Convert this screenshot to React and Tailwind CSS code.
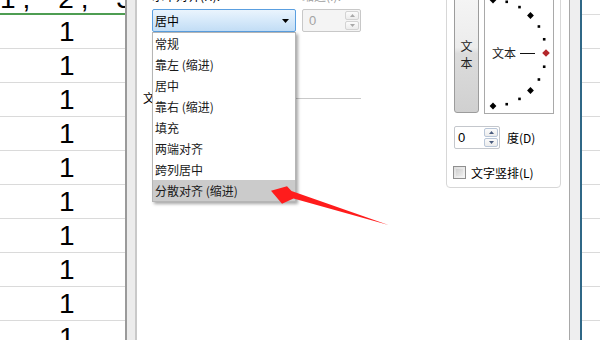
import React from "react";

function SpinButtons({ enabled }) {
  const tri = enabled ? "#4a5c7e" : "#a9a9a9";
  const brd = enabled ? "border-[#b9c6d8]" : "border-[#d3d3d3]";
  return (
    <div className="w-[15px] h-full flex flex-col gap-[1px] py-[1px] pr-[1px]">
      <div className={"flex-1 flex items-center justify-center border rounded-[2px] bg-[linear-gradient(#fbfbfb,#ececec)] " + brd}>
        <svg width="5" height="3" className="block">
          <polygon points="0,3 5,3 2.5,0" fill={tri} />
        </svg>
      </div>
      <div className={"flex-1 flex items-center justify-center border rounded-[2px] bg-[linear-gradient(#fbfbfb,#ececec)] " + brd}>
        <svg width="5" height="3" className="block">
          <polygon points="0,0 5,0 2.5,3" fill={tri} />
        </svg>
      </div>
    </div>
  );
}

function Sheet({ width, header, headerGreen, ones }) {
  const rows = Array.from({ length: 10 }, (_, i) => i);
  return (
    <div
      className="shrink-0 bg-white -mt-[20px] font-['Liberation_Sans',Arial,sans-serif] text-[28px] text-black"
      style={{ width }}
    >
      <div
        className={
          "h-[35px] flex items-center pt-[4px] whitespace-nowrap leading-none tracking-[7px] [word-spacing:6px] " +
          (headerGreen ? "border-b-2 border-[#4e9d52]" : "border-b border-[#dcdcdc]")
        }
      >
        {header}
      </div>
      {rows.map((i) => (
        <div key={i} className="h-[34px] border-b border-[#dadada] flex items-center pl-[59px] leading-none">
          {ones ? "1" : ""}
        </div>
      ))}
    </div>
  );
}

function Dial() {
  const cx = 8;
  const cy = 58;
  const r = 53;
  const pts = [];
  for (let i = 0; i <= 12; i++) {
    const a = (i * 15 * Math.PI) / 180;
    pts.push({ i, x: cx + r * Math.sin(a), y: cy - r * Math.cos(a) });
  }
  return (
    <div className="relative w-[70px] h-[120px] border border-[#a9a9a9] bg-white">
      <svg width="68" height="118" className="block">
        {pts.map((p) => {
          if (p.i === 6) {
            const d = 3.8;
            return (
              <polygon
                key={p.i}
                points={`${p.x},${p.y - d} ${p.x + d},${p.y} ${p.x},${p.y + d} ${p.x - d},${p.y}`}
                fill="#b3262a"
              />
            );
          }
          if (p.i % 3 === 0) {
            const d = 3.4;
            return (
              <polygon
                key={p.i}
                points={`${p.x},${p.y - d} ${p.x + d},${p.y} ${p.x},${p.y + d} ${p.x - d},${p.y}`}
                fill="#000"
              />
            );
          }
          return <rect key={p.i} x={p.x - 1.3} y={p.y - 1.3} width="2.6" height="2.6" fill="#000" />;
        })}
        <line x1="35" y1="58.5" x2="50" y2="58.5" stroke="#111" strokeWidth="1" />
      </svg>
      <span className="absolute left-[7px] top-[50px] text-[12px] leading-[16px] text-[#222]">文本</span>
    </div>
  );
}

export default function App() {
  const items = ["常规", "靠左 (缩进)", "居中", "靠右 (缩进)", "填充", "两端对齐", "跨列居中", "分散对齐 (缩进)"];
  return (
    <div className="relative w-[600px] h-[340px] overflow-hidden bg-white flex items-start font-['Noto_Sans_CJK_SC','Microsoft_YaHei',sans-serif] text-black">
      <Sheet width={125} header="1, 2, 3" headerGreen ones />

      {/* left window frame */}
      <div className="w-[2px] h-full shrink-0 bg-[#9a9a9a]" />
      <div className="w-[8px] h-full shrink-0 bg-[#ececec]" />
      <div className="w-[2px] h-full shrink-0 bg-[#c9c9c9]" />

      {/* dialog body */}
      <div className="w-[432px] h-full shrink-0 bg-white flex items-start">
        <div className="w-[224px] shrink-0 flex flex-col -mt-[11px]">
          <div className="flex pl-[15px] gap-[6px]">
            <div className="w-[144px] flex flex-col">
              <div className="h-[14px] leading-[14px] text-[12px] whitespace-nowrap">水平对齐(H):</div>
              <div className="relative mt-[6px] z-10">
                <div className="h-[23px] border border-[#5a9fe0] rounded-[2px] bg-[linear-gradient(#eaf4fd,#d6e9fa_50%,#c2ddf5)] flex items-center pl-[2px] text-[12px]">
                  <span className="flex-1 leading-none">居中</span>
                  <svg width="7" height="4" className="block mr-[6px]">
                    <polygon points="0,0 7,0 3.5,4" fill="#000" />
                  </svg>
                </div>
                <div className="absolute top-full left-0 w-[144px] bg-white border border-[#b5b5b5] shadow-[2px_2px_3px_rgba(0,0,0,0.35)]">
                  {items.map((t, i) => (
                    <div
                      key={t}
                      className={
                        "h-[21px] leading-[21px] pl-[2px] text-[12px] whitespace-nowrap text-[#1a1a1a] " +
                        (i === items.length - 1 ? "bg-[#cbcbcb]" : "")
                      }
                    >
                      {t}
                    </div>
                  ))}
                </div>
              </div>
            </div>
            <div className="w-[59px] flex flex-col">
              <div className="h-[14px] leading-[14px] text-[12px] text-[#a0a0a0] whitespace-nowrap">缩进(I):</div>
              <div className="mt-[6px] h-[23px] border border-[#c8c8c8] rounded-[2px] bg-[#f4f4f4] flex items-center">
                <span className="flex-1 pl-[6px] text-[13px] leading-none text-[#a3a3a3] font-['Liberation_Sans',Arial,sans-serif]">0</span>
                <SpinButtons />
              </div>
            </div>
          </div>
          <div className="flex items-center ml-[6px] mt-[59px] h-[14px]">
            <span className="text-[12px] leading-[14px] whitespace-nowrap">文本控制</span>
            <div className="flex-1 h-[1px] bg-[#c9c9c9] ml-[4px]" />
          </div>
        </div>

        {/* orientation group */}
        <div className="ml-[85px] w-[115px] shrink-0 -mt-[10px] h-[198px] border border-[#d7d7d7] rounded-[4px] pt-[3px] pl-[7px] flex flex-col">
          <div className="flex items-start gap-[5px]">
            <div className="w-[25px] h-[119px] border border-[#9c9c9c] rounded-b-[3px] bg-[linear-gradient(#f5f5f5_0%,#ececec_45%,#dcdcdc_50%,#d0d0d0_100%)] flex flex-col items-center justify-center text-[12px] leading-[17px] text-[#222]">
              <span>文</span>
              <span>本</span>
            </div>
            <Dial />
          </div>
          <div className="flex items-center mt-[12px] h-[23px]">
            <div className="w-[46px] h-[23px] border border-[#c4c7cc] rounded-[2px] bg-white flex items-center">
              <span className="flex-1 pl-[3px] text-[13px] leading-none font-['Liberation_Sans',Arial,sans-serif]">0</span>
              <SpinButtons enabled />
            </div>
            <span className="ml-[7px] text-[12px] leading-none whitespace-nowrap">度(D)</span>
          </div>
          <div className="flex items-center mt-[17px] h-[13px] -ml-[1px]">
            <div className="w-[13px] h-[13px] border border-[#8f8f8f] bg-[linear-gradient(135deg,#dcdcdc,#f6f6f6)] p-[2px]">
              <div className="w-full h-full bg-[linear-gradient(135deg,#cfcfcf,#ededed)]" />
            </div>
            <span className="ml-[5px] text-[12px] leading-none whitespace-nowrap">文字竖排(L)</span>
          </div>
        </div>
      </div>

      {/* right window frame */}
      <div className="w-[1px] h-full shrink-0 bg-[#a8a8a8]" />
      <div className="w-[10px] h-full shrink-0 bg-[#eeeeef]" />
      <div className="w-[2px] h-full shrink-0 bg-[#2f6786]" />

      <Sheet width={18} header="" />

      {/* red annotation arrow */}
      <svg width="600" height="340" className="absolute inset-0 pointer-events-none z-20">
        <polygon
          points="271,190.7 287,186.3 291.5,191 388.5,225 293.5,198.5 282,203.8"
          fill="#ff1c1c"
        />
      </svg>
    </div>
  );
}
